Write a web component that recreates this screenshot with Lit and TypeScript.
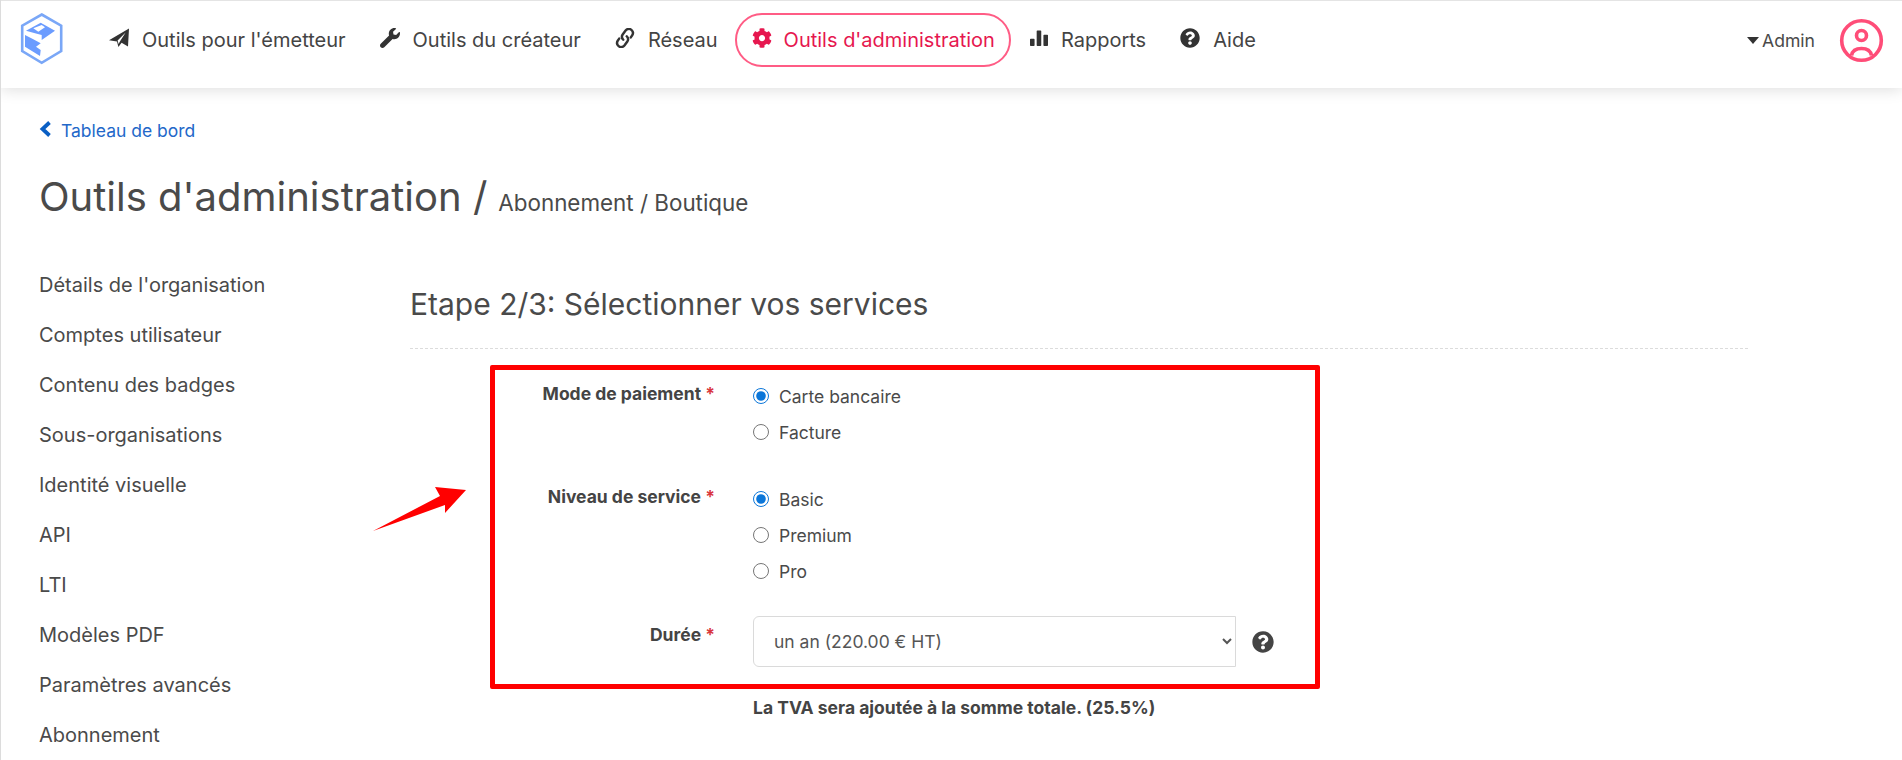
import { LitElement, html, css, svg } from "lit";
import { customElement } from "lit/decorators.js";

const ICONS: Record<string, { vb: string; d: string }> = {
  wrench: { vb: "0 0 512 512", d: "M507.73 109.1c-2.24-9.03-13.54-12.09-20.12-5.51l-74.36 74.36-67.88-11.31-11.31-67.88 74.36-74.36c6.62-6.62 3.43-17.9-5.66-20.16-47.38-11.74-99.55.91-136.58 37.93-39.64 39.64-50.55 97.1-34.05 147.2L18.74 402.76c-24.99 24.99-24.99 65.51 0 90.5 24.99 24.99 65.51 24.99 90.5 0l213.21-213.21c50.12 16.71 107.47 5.68 147.37-34.22 37.07-37.07 49.7-89.32 37.91-136.73z" },
  cog: { vb: "0 0 512 512", d: "M487.4 315.7l-42.6-24.6c4.3-23.2 4.3-47 0-70.2l42.6-24.6c4.9-2.8 7.1-8.6 5.5-14-11.1-35.6-30-67.8-54.7-94.6-3.8-4.1-10-5.1-14.8-2.3L380.8 110c-17.9-15.4-38.5-27.3-60.8-35.1V25.8c0-5.6-3.9-10.5-9.4-11.7-36.7-8.2-74.3-7.8-109.2 0-5.5 1.2-9.4 6.1-9.4 11.7V75c-22.2 7.9-42.8 19.8-60.8 35.1L88.7 85.5c-4.9-2.8-11-1.9-14.8 2.3-24.7 26.7-43.6 58.9-54.7 94.6-1.7 5.4.6 11.2 5.5 14L67.3 221c-4.3 23.2-4.3 47 0 70.2l-42.6 24.6c-4.9 2.8-7.1 8.6-5.5 14 11.1 35.6 30 67.8 54.7 94.6 3.8 4.1 10 5.1 14.8 2.3l42.6-24.6c17.9 15.4 38.5 27.3 60.8 35.1v49.2c0 5.6 3.9 10.5 9.4 11.7 36.7 8.2 74.3 7.8 109.2 0 5.5-1.2 9.4-6.1 9.4-11.7v-49.2c22.2-7.9 42.8-19.8 60.8-35.1l42.6 24.6c4.9 2.8 11 1.9 14.8-2.3 24.7-26.7 43.6-58.9 54.7-94.6 1.5-5.5-.7-11.3-5.6-14.1zM256 336c-44.1 0-80-35.9-80-80s35.9-80 80-80 80 35.9 80 80-35.9 80-80 80z" },
  bars: { vb: "0 0 512 512", d: "M0 300c0-11 9-20 20-20h90c11 0 20 9 20 20v160c0 11-9 20-20 20H20c-11 0-20-9-20-20zM190 60c0-11 9-20 20-20h90c11 0 20 9 20 20v400c0 11-9 20-20 20h-90c-11 0-20-9-20-20zM382 180c0-11 9-20 20-20h90c11 0 20 9 20 20v280c0 11-9 20-20 20h-90c-11 0-20-9-20-20z" },
  help: { vb: "0 0 512 512", d: "M504 256c0 136.997-111.043 248-248 248S8 392.997 8 256C8 119.083 119.043 8 256 8s248 111.083 248 248zM262.655 90c-54.497 0-89.255 22.957-116.549 63.758-3.536 5.286-2.353 12.415 2.715 16.258l34.699 26.31c5.205 3.947 12.621 3.008 16.665-2.122 17.864-22.658 30.113-35.797 57.303-35.797 20.429 0 45.698 13.148 45.698 32.958 0 14.976-12.363 22.667-32.534 33.976C247.128 238.528 216 254.941 216 296v4c0 6.627 5.373 12 12 12h56c6.627 0 12-5.373 12-12v-1.333c0-28.462 83.186-29.647 83.186-106.667 0-58.002-60.165-102-116.531-102zM256 338c-25.365 0-46 20.635-46 46 0 25.364 20.635 46 46 46s46-20.636 46-46c0-25.365-20.635-46-46-46z" },
};

const icon = (name: string, cls = "ico") => {
  if (name === "plane") {
    return html`<svg class=${cls} viewBox="0 0 20 20" aria-hidden="true">
      <path fill="currentColor" d="M0 12.2 L20 0.4 L19 18.6 L12.6 14.8 L9.4 19 L8 13.6 Z"></path>
      <path fill="#fff" d="M8.6 12.6 L16.6 4.4 L10.6 13.9 L9.6 16 Z"></path>
    </svg>`;
  }
  if (name === "link") {
    return html`<svg class=${cls} viewBox="2.2 1.4 15.6 17.2" aria-hidden="true">
      <g fill="none" stroke="currentColor" stroke-width="2.1" stroke-linecap="round">
        <path d="M8.5 11.5 C7 10 7 8.5 8 7 L10.5 3.5 C11.7 2 14 1.7 15.5 3 C17 4.3 17.2 6.3 16 8 L15 9.5"></path>
        <path d="M11.5 8.5 C13 10 13 11.5 12 13 L9.5 16.5 C8.3 18 6 18.3 4.5 17 C3 15.7 2.8 13.7 4 12 L5 10.5"></path>
      </g>
    </svg>`;
  }
  return html`<svg class=${cls} viewBox=${ICONS[name].vb} aria-hidden="true"><path fill="currentColor" d=${ICONS[name].d}></path></svg>`;
};

const NAV = [
  { i: "plane", t: "Outils pour l'émetteur" },
  { i: "wrench", t: "Outils du créateur" },
  { i: "link", t: "Réseau" },
  { i: "cog", t: "Outils d'administration", active: true },
  { i: "bars", t: "Rapports" },
  { i: "help", t: "Aide" },
];

const SIDE = [
  "Détails de l'organisation",
  "Comptes utilisateur",
  "Contenu des badges",
  "Sous-organisations",
  "Identité visuelle",
  "API",
  "LTI",
  "Modèles PDF",
  "Paramètres avancés",
  "Abonnement",
];

@customElement("app-root")
export class AppRoot extends LitElement {
  static styles = css`
    :host {
      display: block;
      position: relative;
      height: 760px;
      overflow: hidden;
      background: #fff;
      font-family: Inter, "Liberation Sans", sans-serif;
      color: #4a4a4a;
      box-sizing: border-box;
      border-left: 1px solid #dcdcdc;
    }
    * { box-sizing: border-box; }
    .top {
      height: 88px;
      display: flex;
      align-items: center;
      padding: 0 18px 9px 19px;
      border-top: 1px solid #e4e4e4;
      background: #fff;
      box-shadow: 0 2px 14px rgba(0, 0, 0, 0.13);
    }
    .logo { width: 46px; height: 54px; flex: none; margin-right: 26px; }
    .nav { display: flex; align-items: center; }
    .item {
      display: flex;
      align-items: center;
      gap: 13px;
      height: 54px;
      padding: 0 15px;
      border: 2px solid transparent;
      border-radius: 27px;
      font-size: 20px;
      color: #444;
      white-space: nowrap;
    }
    .item .ico { width: 20px; height: 20px; color: #333; margin-top: -4px; }
    .item.active { gap: 12px; padding-right: 14px; margin-right: 2px; border-color: #ff5c85; color: #e6174f; }
    .item.active .ico { color: #e6174f; }
    .item.bars .ico { width: 18px; height: 18px; }
    .user { margin-left: auto; display: flex; align-items: center; gap: 24px; }
    .admin { display: flex; align-items: center; gap: 3px; font-size: 17.6px; color: #4a4a4a; }
    .caret { width: 0; height: 0; border: 6.5px solid transparent; border-top: 7px solid #333; border-bottom: 0; }
    .avatar { width: 45px; height: 45px; display: block; }

    .main { padding: 32px 0 0 38px; }
    .back { display: flex; align-items: center; gap: 9px; height: 20px; font-size: 17.5px; color: #2368c9; }
    .back svg { width: 13px; height: 16px; margin-top: -3px; color: #0a5fc4; }
    .title { display: flex; align-items: baseline; gap: 11px; margin: 33px 0 0; font-weight: 400; height: 47px; line-height: 47px; font-size: 40px; color: #4a4a4a; }
    .title small { font-size: 22.4px; }
    .cols { display: grid; grid-template-columns: 371px 1338px; margin-top: 40px; }
    .side { display: flex; flex-direction: column; }
    .side a { height: 50px; line-height: 50px; font-size: 20px; color: #4a4a4a; white-space: nowrap; }
    .content { padding-top: 25px; }
    h2 { margin: 0; padding-bottom: 24px; font-size: 30px; line-height: 39px; font-weight: 400; color: #4a4a4a; border-bottom: 1px dashed #dcdcdc; }
    .form { display: flex; flex-direction: column; }
    .row { display: grid; grid-template-columns: 305px 1fr; column-gap: 38px; }
    .r1 { margin-top: 29px; }
    .r2 { margin-top: 31px; }
    .r3 { margin-top: 27px; }
    .lab { text-align: right; font-size: 17.5px; font-weight: 700; line-height: 24px; color: #444; padding-top: 4px; }
    .r3 .lab { padding-top: 7px; }
    .lab span { color: #d9363e; }
    .radios { display: flex; flex-direction: column; }
    .radios label { display: flex; align-items: center; height: 36px; gap: 10px; font-size: 17.5px; color: #4a4a4a; }
    input[type="radio"] { width: 16px; height: 16px; margin: 0; accent-color: #0b76d9; }
    .ctl { display: flex; align-items: center; gap: 16px; }
    select {
      width: 483px;
      height: 51px;
      padding: 0 16px;
      font: inherit;
      font-size: 17.5px;
      color: #555;
      background: #fff;
      border: 1px solid #dadada;
      border-radius: 6px 0 0 6px;
    }
    .ctl svg { width: 22px; height: 22px; color: #444; }
    .tva { margin: 29px 0 0 343px; font-size: 17.5px; font-weight: 700; color: #444; line-height: 24px; }

    .box { position: absolute; left: 489px; top: 365px; width: 830px; height: 324px; border: 5px solid #ff0000; border-radius: 2px; pointer-events: none; }
    .arrow { position: absolute; left: 0; top: 0; width: 500px; height: 560px; pointer-events: none; }
  `;

  render() {
    return html`
      <header class="top">
        <svg class="logo" viewBox="0 0 46 54" aria-hidden="true">
          <path d="M21.7 1.5 L41.2 12.7 V38 L21.7 49.8 L2.2 38 V12.7 Z" fill="none" stroke="#7aa7f7" stroke-width="2.6"></path>
          <path d="M6 17.7 L20.7 9.7 L35 17.7 L21.7 27 V22 L15 20.3 Z" fill="#6b9cff"></path>
          <path d="M13.3 15.3 L21.7 12 L25 14.3 L18.3 18.7 Z" fill="#fff"></path>
          <path d="M5 22 V33.7 L20 43 L20.7 37 L16 33.7 L20.7 30.3 L13.3 26.3 Z" fill="#6b9cff"></path>
        </svg>
        <nav class="nav">
          ${NAV.map(
            (n) => html`<a class="item ${n.active ? "active" : ""} ${n.i}">${icon(n.i)}<span>${n.t}</span></a>`
          )}
        </nav>
        <div class="user">
          <div class="admin"><i class="caret"></i>Admin</div>
          <svg class="avatar" viewBox="0 0 45 45" fill="none" stroke="#ff4d78" stroke-width="3.6" aria-hidden="true">
            <circle cx="22.5" cy="22.5" r="19.8"></circle>
            <circle cx="22.5" cy="17.5" r="5"></circle>
            <path d="M12.5 37.5 C13.5 32 18 30.5 22.5 30.5 C27 30.5 31.5 32 32.5 37.5"></path>
          </svg>
        </div>
      </header>
      <main class="main">
        <a class="back">
          <svg viewBox="0 0 13 16" aria-hidden="true"><path fill="none" stroke="currentColor" stroke-width="3.8" d="M10.5 1.5 L3.5 8 L10.5 14.5"></path></svg>
          Tableau de bord
        </a>
        <h1 class="title">Outils d'administration / <small>Abonnement / Boutique</small></h1>
        <div class="cols">
          <nav class="side">${SIDE.map((s) => html`<a>${s}</a>`)}</nav>
          <section class="content">
            <h2>Etape 2/3: Sélectionner vos services</h2>
            <div class="form">
              <div class="row r1">
                <div class="lab">Mode de paiement <span>*</span></div>
                <div class="radios">
                  <label><input type="radio" name="pay" checked />Carte bancaire</label>
                  <label><input type="radio" name="pay" />Facture</label>
                </div>
              </div>
              <div class="row r2">
                <div class="lab">Niveau de service <span>*</span></div>
                <div class="radios">
                  <label><input type="radio" name="lvl" checked />Basic</label>
                  <label><input type="radio" name="lvl" />Premium</label>
                  <label><input type="radio" name="lvl" />Pro</label>
                </div>
              </div>
              <div class="row r3">
                <div class="lab">Durée <span>*</span></div>
                <div class="ctl">
                  <select><option>un an (220.00 € HT)</option></select>
                  ${icon("help")}
                </div>
              </div>
              <div class="tva">La TVA sera ajoutée à la somme totale. (25.5%)</div>
            </div>
          </section>
        </div>
      </main>
      <div class="box"></div>
      <svg class="arrow" viewBox="0 0 500 560" aria-hidden="true">
        ${svg`<polygon fill="#ff0000" points="372,531 439,496 434,487 465,490 444,513 444,505"></polygon>`}
      </svg>
    `;
  }
}
